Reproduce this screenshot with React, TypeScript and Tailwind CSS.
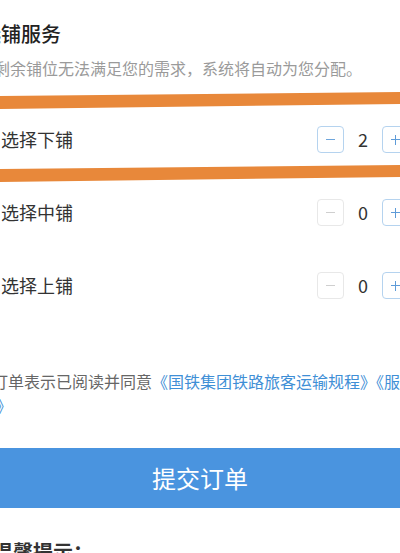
import React from "react"

type Row = { label: string; count: number }

const rows: Row[] = [
  { label: "选择下铺", count: 2 },
  { label: "选择中铺", count: 0 },
  { label: "选择上铺", count: 0 },
]

function Stepper({ count }: { count: number }) {
  const canMinus = count > 0
  return (
    <div className="flex items-center mr-[-9px]">
      <button
        type="button"
        className={
          canMinus
            ? "w-[27px] h-[27px] rounded-[4px] border border-[#b5d3ef] flex items-center justify-center"
            : "w-[27px] h-[27px] rounded-[4px] border border-[#e8e8e8] flex items-center justify-center"
        }
      >
        <span className={canMinus ? "block w-[9px] h-[1.5px] bg-[#6fa6dc]" : "block w-[9px] h-[1.5px] bg-[#cfcfcf]"} />
      </button>
      <span className="w-[38px] text-center text-[18px] leading-[27px] text-[#333]">{count}</span>
      <button
        type="button"
        className="relative w-[27px] h-[27px] rounded-[4px] border border-[#b5d3ef] flex items-center justify-center"
      >
        <span className="absolute w-[10px] h-[1.5px] bg-[#5e9bd8]" />
        <span className="absolute w-[1.5px] h-[10px] bg-[#5e9bd8]" />
      </button>
    </div>
  )
}

export default function App() {
  return (
    <div
      className="relative w-full h-[553px] overflow-hidden bg-white"
      style={{ fontFamily: '"Noto Sans CJK SC", "Noto Sans", sans-serif' }}
    >
      <div className="pt-[22px]">
        <h2 className="ml-[-19px] text-[20px] leading-[24px] font-medium text-[#222] whitespace-nowrap">选铺服务</h2>
        <p className="mt-[12px] ml-[-6px] text-[16px] leading-[20px] text-[#9a9a9a] whitespace-nowrap">
          剩余铺位无法满足您的需求，系统将自动为您分配。
        </p>
      </div>

      <div className="mt-[25px]">
        {rows.map((r) => (
          <div key={r.label} className="h-[73px] flex items-center justify-between">
            <span className="ml-[1px] text-[18px] text-[#333]">{r.label}</span>
            <Stepper count={r.count} />
          </div>
        ))}
      </div>

      <div className="mt-[47px] ml-[-40px] text-[16px] leading-[24px] whitespace-nowrap">
        <div className="text-[#666]">
          提交订单表示已阅读并同意
          <span className="text-[#3f8fd6]">《国铁集团铁路旅客运输规程》《服务条款》</span>
        </div>
        <div className="ml-[4px] text-[#3f8fd6]">协议》</div>
      </div>

      <button
        type="button"
        className="mt-[31px] w-full h-[60px] bg-[#4a94df] text-white text-[24px] flex items-center justify-center"
      >
        提交订单
      </button>

      <div className="mt-[33px] ml-[-7px] text-[20px] leading-[22px] font-bold text-[#333] whitespace-nowrap">
        温馨提示：
      </div>

      {/* orange marker strokes over the first row */}
      <svg className="absolute inset-0 pointer-events-none" width="400" height="553" viewBox="0 0 400 553">
        <polygon points="0,96 400,92 400,104 0,109" fill="#e8883a" />
        <polygon points="0,169 400,165 400,177 0,182" fill="#e8883a" />
      </svg>
    </div>
  )
}
